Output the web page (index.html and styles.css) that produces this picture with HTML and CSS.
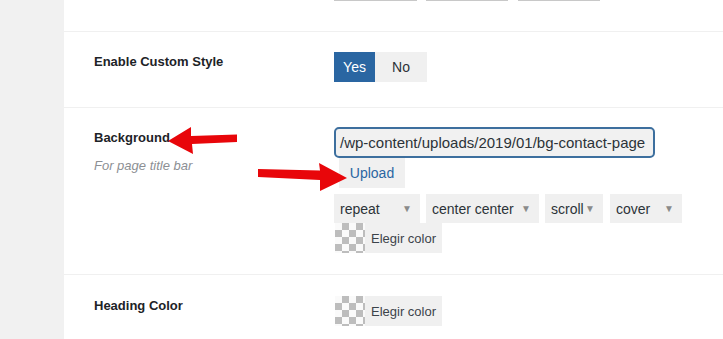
FILE: index.html
```html
<!DOCTYPE html>
<html>
<head>
<meta charset="utf-8">
<link rel="stylesheet" href="styles.css">
</head>
<body>
<div class="layout">
  <aside class="sidebar"></aside>
  <main class="panel">
    <div class="row row-top">
      <div class="label"></div>
      <div class="field boxes">
        <span class="box b1"></span><span class="box b2"></span><span class="box b3"></span>
      </div>
    </div>
    <div class="row row-enable">
      <div class="label"><h4>Enable Custom Style</h4></div>
      <div class="field">
        <div class="toggle"><span class="opt on">Yes</span><span class="opt">No</span></div>
      </div>
    </div>
    <div class="row row-bg">
      <div class="label">
        <h4>Background</h4>
        <p class="desc">For page title bar</p>
      </div>
      <div class="field">
        <div class="input">/wp-content/uploads/2019/01/bg-contact-page</div>
        <div class="upload">Upload</div>
        <div class="selects">
          <span class="sel s1">repeat<i>▼</i></span>
          <span class="sel s2">center center<i>▼</i></span>
          <span class="sel s3">scroll<i>▼</i></span>
          <span class="sel s4">cover<i>▼</i></span>
        </div>
        <div class="picker"><span class="swatch"></span><span class="pick">Elegir color</span></div>
      </div>
    </div>
    <div class="row row-heading">
      <div class="label"><h4>Heading Color</h4></div>
      <div class="field">
        <div class="picker"><span class="swatch"></span><span class="pick">Elegir color</span></div>
      </div>
    </div>
  </main>
</div>
<svg class="arrow a1" width="72" height="30" viewBox="0 0 72 30">
  <path d="M70 8.5 L24 10 L24 1 L1 15 L26 28 L25 18 L70 16 Z" fill="#e8060a"/>
</svg>
<svg class="arrow a2" width="94" height="30" viewBox="0 0 94 30">
  <path d="M1 6 L63 7.5 L62 0 L90 15 L63 28 L63 17 L1 14 Z" fill="#e8060a"/>
</svg>
</body>
</html>
```
FILE: styles.css
```css
* { box-sizing: border-box; }
html, body { margin: 0; padding: 0; background: #fff; overflow: hidden; }
body {
  font-family: "Liberation Sans", Arial, sans-serif;
  color: #1d2327;
  width: 723px;
  height: 339px;
  position: relative;
}
.layout { display: flex; height: 339px; }
.sidebar { width: 64px; flex: none; background: #f1f1f1; }
.panel { flex: 1; background: #fff; }
.row {
  display: flex;
  border-bottom: 1px solid #f0f0f0;
}
.label { width: 270px; flex: none; padding-left: 30px; }
.label h4 { margin: 0; font-size: 13px; font-weight: 700; line-height: 20px; color: #1d2327; }
.desc { margin: 8px 0 0; font-size: 13px; font-style: italic; color: #8c8f94; line-height: 20px; }
.field { flex: 1; }

.row-top { margin-top: -29px; padding-bottom: 30px; }
.boxes { display: flex; gap: 0; }
.box { height: 30px; background: #f0f0f0; border-bottom: 1px solid #c8c8c8; }
.b1 { width: 83px; }
.b2 { width: 82px; margin-left: 9px; }
.b3 { width: 82px; margin-left: 10px; }

.row-enable { padding: 20px 0 25px; }
.row-enable .label { padding-top: 0; }
.toggle { display: flex; height: 30px; }
.opt {
  display: flex; align-items: center; justify-content: center;
  font-size: 14px; background: #f0f0f0; color: #2c3338;
  width: 52px;
}
.opt.on { background: #2a66a2; color: #fff; width: 41px; }

.row-bg { padding: 19px 0 21px; }
.row-bg .label { padding-top: 1px; }
.input {
  width: 321px; height: 31px;
  border: 2px solid #3d6f9e; border-radius: 5px;
  background: #f1f1f1;
  font-size: 15px; color: #2c3338;
  line-height: 27px; padding-left: 4px;
  white-space: nowrap; overflow: hidden;
}
.upload {
  width: 66px; height: 30px; margin-left: 5px;
  background: #f0f0f0; color: #2a66a2;
  font-size: 14px; display: flex; align-items: center; justify-content: center;
}
.selects { display: flex; margin-top: 6px; height: 29px; }
.sel {
  display: flex; align-items: center; justify-content: space-between;
  background: #f0f0f0; color: #2c3338; font-size: 14px;
  padding: 0 8px 0 6px;
}
.sel i { font-style: normal; font-size: 10px; color: #8a8a8a; }
.s1 { width: 86px; }
.s2 { width: 113px; margin-left: 6px; }
.s3 { width: 58px; margin-left: 6px; }
.s4 { width: 72px; margin-left: 7px; }

.picker { display: flex; height: 30px; margin-left: 1px; }
.swatch {
  width: 30px; height: 30px;
  background: repeating-conic-gradient(#bdbdbd 0 25%, #fafafa 0 50%) 0 0 / 14px 14px;
}
.pick {
  width: 77px; background: #f0f0f0; color: #3c434a; font-size: 13px;
  display: flex; align-items: center; justify-content: center;
}

.row-heading { padding: 21px 0 20px; border-bottom: none; }
.row-heading .label { padding-top: 0; }

.arrow { position: absolute; }
.a1 { left: 167px; top: 126px; }
.a2 { left: 257px; top: 163px; }
```
